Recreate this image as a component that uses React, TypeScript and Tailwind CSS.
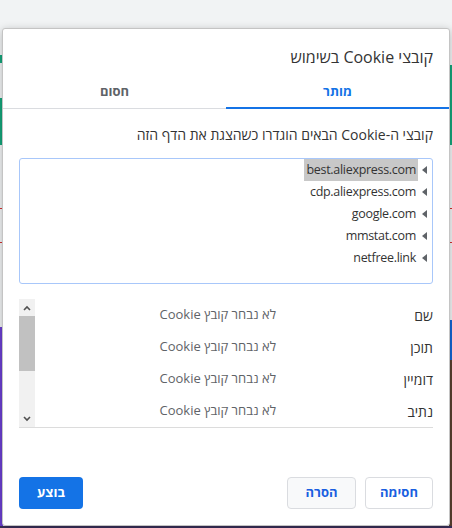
import React from "react";

const domains = [
  "best.aliexpress.com",
  "cdp.aliexpress.com",
  "google.com",
  "mmstat.com",
  "netfree.link",
];

const fields = ["שם", "תוכן", "דומיין", "נתיב"];

const font = { fontFamily: '"Open Sans", "Liberation Sans", "DejaVu Sans", sans-serif' };

function Caret() {
  return (
    <svg width="5" height="8" viewBox="0 0 5 8" className="shrink-0">
      <path d="M5 0 L0 4 L5 8 Z" fill="#5f6368" />
    </svg>
  );
}

function Chevron({ up }: { up?: boolean }) {
  return (
    <svg width="8" height="6" viewBox="0 0 8 6">
      <path
        d={up ? "M1 5 L4 2 L7 5" : "M1 1 L4 4 L7 1"}
        fill="none"
        stroke="#505050"
        strokeWidth="1.6"
      />
    </svg>
  );
}

export default function App() {
  return (
    <div className="relative w-[452px] h-[528px] overflow-hidden bg-[#f1f3f4]" style={font}>
      {/* page behind the dialog, peeking at the edges */}
      <div className="absolute left-0 top-[55px] w-[3px] h-[8px] bg-[#14a57a]" />
      <div className="absolute left-0 top-[98px] w-[3px] h-[47px] bg-[#14a57a]" />
      <div className="absolute right-0 top-[65px] w-[3px] h-[80px] bg-[#14a57a]" />
      <div className="absolute left-0 right-0 top-[208px] h-[1px] bg-[#d32f2f]" />
      <div className="absolute left-0 right-0 top-[242px] h-[1px] bg-[#d32f2f]" />
      <div className="absolute left-0 top-[327px] w-[3px] h-[201px] bg-[#6b3fd1]" />
      <div className="absolute right-0 top-[320px] w-[3px] h-[40px] bg-[#1466d4]" />
      <div className="absolute right-0 top-[360px] w-[3px] h-[168px] bg-[#5a4030]" />
      <div className="absolute left-0 right-0 bottom-0 h-[2px] bg-[#3a2f5a]" />

      {/* dialog */}
      <div
        dir="rtl"
        className="absolute left-[2px] top-[28px] w-[448px] h-[498px] bg-white border border-[#c4c4c4] rounded-[3px] shadow-[0_2px_8px_rgba(0,0,0,0.25)] flex flex-col"
      >
        <div className="px-4 pt-[18px] text-[16px] leading-[20px] text-[#333]">
          קובצי Cookie בשימוש
        </div>

        <div className="mt-[9px] flex shadow-[inset_0_-1px_0_#dadce0]">
          <div className="flex-1 h-[33px] flex items-center justify-center border-b-2 border-[#1473e6] text-[13px] font-bold text-[#1473e6]">
            מותר
          </div>
          <div className="flex-1 h-[33px] flex items-center justify-center border-b-2 border-transparent text-[13px] font-bold text-[#5f6368]">
            חסום
          </div>
        </div>

        <div className="px-4 mt-[17px] text-[14px] leading-[18px] text-[#333]">
          קובצי ה-Cookie הבאים הוגדרו כשהצגת את הדף הזה
        </div>

        <div className="mx-4 mt-[14px] h-[126px] border border-[#a8c7fa] rounded-[3px] flex flex-col">
          {domains.map((d, i) => (
            <div key={d} className="h-[22px] flex items-center gap-[4px] pr-[5px]">
              <Caret />
              <span
                className={`px-[2px] h-[22px] pt-[1px] flex items-center text-[12.5px] tracking-[-0.3px] text-[#333] ${
                  i === 0 ? "bg-[#c8c8c8]" : ""
                }`}
              >
                {d}
              </span>
            </div>
          ))}
        </div>

        <div className="mx-4 mt-[15px] h-[129px] border-b border-[#dcdcdc] flex">
          <div className="flex-1 flex flex-col">
            {fields.map((f) => (
              <div key={f} className="h-[32px] flex items-center">
                <span className="w-[157px] shrink-0 text-[14px] text-[#333]">{f}</span>
                <span className="text-[13px] text-[#5f6368]">לא נבחר קובץ Cookie</span>
              </div>
            ))}
          </div>
          <div className="w-[16px] h-[128px] bg-[#f1f1f1] flex flex-col">
            <div className="h-[17px] flex items-center justify-center">
              <Chevron up />
            </div>
            <div className="h-[55px] bg-[#c1c1c1]" />
            <div className="flex-1" />
            <div className="h-[17px] flex items-center justify-center">
              <Chevron />
            </div>
          </div>
        </div>

        <div className="px-4 mt-[49px] flex items-center">
          <button className="w-[68px] h-[32px] rounded-[4px] border border-[#dadce0] bg-white text-[13px] font-bold text-[#1a5fe0]">
            חסימה
          </button>
          <button className="mr-[9px] w-[69px] h-[32px] rounded-[4px] border border-[#dadce0] bg-[#f8f9fa] text-[13px] font-bold text-[#1a5fe0]">
            הסרה
          </button>
          <button className="mr-auto w-[64px] h-[32px] rounded-[4px] bg-[#1473e6] text-[13px] font-bold text-white">
            בוצע
          </button>
        </div>
      </div>
    </div>
  );
}
